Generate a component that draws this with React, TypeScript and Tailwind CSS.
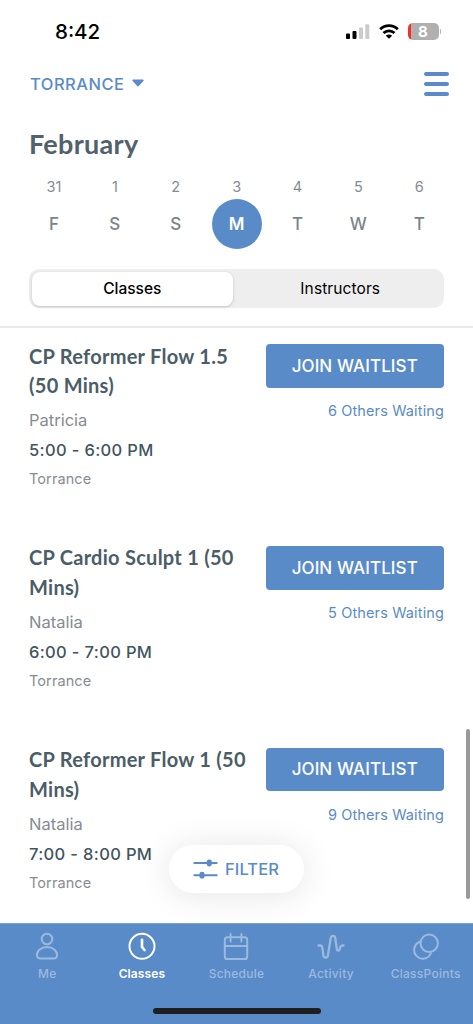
import type { ReactNode } from "react";
import { clsx } from "clsx";

const days = [
  { date: "31", day: "F" },
  { date: "1", day: "S" },
  { date: "2", day: "S" },
  { date: "3", day: "M" },
  { date: "4", day: "T" },
  { date: "5", day: "W" },
  { date: "6", day: "T" },
];

const classes = [
  { title: ["CP Reformer Flow 1.5", "(50 Mins)"], instructor: "Patricia", time: "5:00 - 6:00 PM", waiting: 6 },
  { title: ["CP Cardio Sculpt 1 (50", "Mins)"], instructor: "Natalia", time: "6:00 - 7:00 PM", waiting: 5 },
  { title: ["CP Reformer Flow 1 (50", "Mins)"], instructor: "Natalia", time: "7:00 - 8:00 PM", waiting: 9 },
];

export default function App() {
  return (
    <div className="relative flex h-[1024px] w-[473px] flex-col overflow-hidden bg-white font-['Inter',sans-serif]">
      <StatusBar />

      {/* --- HEADER --- */}
      <header className="flex h-[42px] shrink-0 items-center justify-between pl-[30px] pr-6">
        <button className="flex items-center gap-[7px] text-[#5a8bc9]">
          <span className="text-[16.5px] font-medium tracking-[0.5px]">TORRANCE</span>
          <svg width="12" height="8" viewBox="0 0 12 8" fill="currentColor" className="-mt-[3px]">
            <path d="M1.2 0.5h9.6c.8 0 1.1.8.6 1.4L6.8 7a1.1 1.1 0 0 1-1.6 0L.6 1.9C.1 1.3.4.5 1.2.5Z" />
          </svg>
        </button>
        <button className="flex flex-col gap-1.5">
          <span className="h-1 w-[25px] rounded-full bg-[#5a8bc9]" />
          <span className="h-1 w-[25px] rounded-full bg-[#5a8bc9]" />
          <span className="h-1 w-[25px] rounded-full bg-[#5a8bc9]" />
        </button>
      </header>

      {/* --- CALENDAR --- */}
      <h1 className="mt-[21px] h-9 pl-[29px] font-['Lato',sans-serif] text-[27px] font-bold leading-9 tracking-[0.3px] text-[#51626b]">
        February
      </h1>
      <div className="mt-3 flex pl-[23.5px]">
        {days.map((d, i) => (
          <div key={i} className="flex w-[60.9px] shrink-0 flex-col items-center">
            <span className="h-[25px] text-[14.5px] leading-[25px] text-[#868c92]">{d.date}</span>
            <span
              className={clsx(
                "flex size-[50px] items-center justify-center rounded-full pt-px text-[17px]",
                d.day === "M" ? "bg-[#5a8bc9] font-semibold text-white" : "font-medium text-[#7c848b]"
              )}
            >
              {d.day}
            </span>
          </div>
        ))}
      </div>

      <div className="ml-[29px] mt-5 flex h-[39px] w-[415px] shrink-0 rounded-[10px] bg-[#eeeeee] p-[2.5px] text-[15.5px] text-black">
        <div className="flex w-[201.5px] items-center justify-center rounded-lg bg-white font-medium shadow-[0_1px_3px_rgba(0,0,0,0.18)]">
          Classes
        </div>
        <div className="flex flex-1 items-center justify-center pl-1.5 tracking-[0.1px]">Instructors</div>
      </div>
      <div className="mt-[18px] h-0.5 shrink-0 bg-[#e9e9e9]" />

      {/* --- CLASS LIST --- */}
      <main className="flex min-h-0 flex-1 flex-col overflow-hidden pt-4">
        {classes.map((c) => (
          <ClassRow key={c.time} {...c} />
        ))}
      </main>

      <nav className="flex h-[101px] shrink-0 border-t border-[#7ba2d4] bg-[#5a8bc9] pt-[7px]">
        <Tab label="Me">
          <circle cx="14" cy="8" r="5.3" />
          <path d="M7.2 27.5h13.6a3.3 3.3 0 0 0 3.3-3.4c0-4.5-4.2-8-10.1-8S3.9 19.6 3.9 24.1a3.3 3.3 0 0 0 3.3 3.4Z" />
        </Tab>
        <Tab label="Classes" active>
          <circle cx="14" cy="15.3" r="12.5" />
          <path d="M14 8.7V16l2.5 3" strokeWidth="2.6" />
        </Tab>
        <Tab label="Schedule">
          <rect x="2.8" y="6.2" width="22.4" height="21.8" rx="2.6" />
          <path d="M2.8 15h22.4M8.6 2.9v7.6M19.4 2.9v7.6" />
        </Tab>
        <Tab label="Activity">
          <path
            d="M1.5 14.5h1.7c1.2 0 1.8.6 2 1.8l1.2 8.1c.4 3 4 3 4.5 0L13.7 7.2c.5-3.2 4.2-3.2 4.600 0l1.5 10.8c.3 2.200 2.5 2.200 3 0l.4-1.7c.3-1.2.8-1.8 2-1.8h1.3"
            strokeWidth="2.3"
          />
        </Tab>
        <Tab label="ClassPoints">
          <circle cx="17.2" cy="12.3" r="8.7" />
          <path d="M7.8 10.8a8.7 8.7 0 1 0 11.2 11.2" />
        </Tab>
      </nav>

      <button className="absolute left-[169px] top-[845px] flex h-12 w-[135px] items-center gap-[7px] rounded-full bg-white pl-6 text-[#5a8bc9] shadow-[0_2px_34px_rgba(0,0,0,0.11)]">
        <svg width="25" height="20" viewBox="0 0 25 20" fill="none" stroke="currentColor" strokeWidth="2" strokeLinecap="round">
          <path d="M1.3 4h22.4M1.3 16.2h22.4" />
          <ellipse cx="16.3" cy="4" rx="2.7" ry="3.4" fill="currentColor" stroke="none" />
          <ellipse cx="9" cy="16.2" rx="2.7" ry="3.4" fill="currentColor" stroke="none" />
        </svg>
        <span className="text-[16.5px] font-medium tracking-[0.1px]">FILTER</span>
      </button>

      <div className="absolute left-[466px] top-[729px] h-[170px] w-[3.5px] rounded-full bg-[#999999]" />
      <div className="absolute left-[153px] top-[1008px] h-1.5 w-[168px] rounded-full bg-[#1e1e1e]" />
    </div>
  );
}

function StatusBar() {
  return (
    <div className="flex h-[63px] shrink-0 items-center justify-between pl-[55px] pr-8">
      <span className="pt-px text-[20.5px] font-medium text-black">8:42</span>
      <div className="flex items-center gap-[9px]">
        <svg width="24" height="16" viewBox="0 0 24 16">
          <rect x="0" y="9.5" width="4" height="5.5" rx="1" fill="#000" />
          <rect x="6.5" y="7" width="4" height="8" rx="1" fill="#000" />
          <rect x="13" y="3.5" width="4" height="11.5" rx="1" fill="#cbcbcb" />
          <rect x="19.3" y="0.2" width="4" height="14.800" rx="1" fill="#cbcbcb" />
        </svg>
        <svg width="20" height="16" viewBox="0 0 20 16" fill="none" stroke="#000" strokeWidth="2.8">
          <path d="M1.2 5.2a12.6 12.6 0 0 1 17.6 0M4.5 9.1a8 8 0 0 1 11 0" />
          <path d="M10 14.7 6.9 11.7a4.4 4.4 0 0 1 6.2 0Z" fill="#000" stroke="none" />
        </svg>
        <div className="flex items-center gap-px">
          <div className="flex h-[17px] w-[31px] items-center justify-center rounded-[5px] bg-[linear-gradient(90deg,#fb2c22_2.5px,#b0b0b0_2.5px)] pt-px text-[15px] font-bold text-white">
            8
          </div>
          <span className="h-[5px] w-[1.5px] rounded-r-full bg-[#b0b0b0]" />
        </div>
      </div>
    </div>
  );
}

type ClassRowProps = { title: string[]; instructor: string; time: string; waiting: number };

function ClassRow({ title, instructor, time, waiting }: ClassRowProps) {
  return (
    <section className="flex h-[201.8px] shrink-0 justify-between px-[29px]">
      <div className="whitespace-nowrap text-[#868c92]">
        <h2 className="-mt-[2.5px] font-['Lato',sans-serif] text-[20px] font-bold leading-[29.5px] tracking-[0.27px] text-[#4b5d67]">
          {title[0]}
          <br />
          {title[1]}
        </h2>
        <p className="mt-[7.5px] text-[16.5px] leading-6">{instructor}</p>
        <p className="mt-1.5 text-[16.5px] font-medium leading-6 tracking-[0.35px] text-[#42545e]">{time}</p>
        <p className="mt-[5px] text-[14.5px] leading-6 tracking-[0.1px]">Torrance</p>
      </div>
      <div className="flex flex-col items-end">
        <button className="mt-[0.3px] h-[43.5px] w-[178.5px] rounded bg-[#5a8bc9] pt-px text-[17px] font-medium tracking-[0.1px] text-white">
          JOIN WAITLIST
        </button>
        <p className="mt-[11.5px] text-[14.5px] leading-6 tracking-[0.13px] text-[#5a8bc9]">{waiting} Others Waiting</p>
      </div>
    </section>
  );
}

function Tab({ label, active, children }: { label: string; active?: boolean; children: ReactNode }) {
  return (
    <div
      className={clsx(
        "flex w-[94.6px] shrink-0 flex-col items-center",
        active ? "font-semibold text-white" : "font-medium text-[#9cb9de]"
      )}
    >
      <svg width="28" height="30" viewBox="0 0 28 30" fill="none" stroke="currentColor" strokeWidth="2" strokeLinecap="round" strokeLinejoin="round">
        {children}
      </svg>
      <span className={clsx("mt-1 text-[12px] leading-[18px]", active ? "tracking-[0.1px]" : "tracking-[0.25px]")}>{label}</span>
    </div>
  );
}
